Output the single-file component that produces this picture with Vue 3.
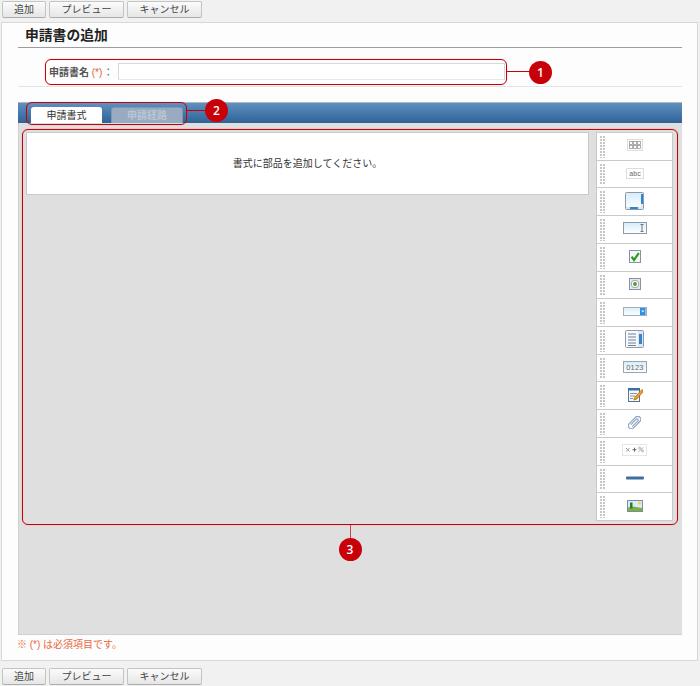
<script setup>
const buttons = [
  { label: '追加', cls: 'btn-add' },
  { label: 'プレビュー', cls: 'btn-preview' },
  { label: 'キャンセル', cls: 'btn-cancel' }
]
</script>

<template>
  <div class="page">
    <div class="toolbar">
      <button v-for="b in buttons" :key="b.label" class="btn" :class="b.cls">{{ b.label }}</button>
    </div>

    <main class="panel">
      <h1 class="title">申請書の追加</h1>

      <div class="form-row">
        <label class="field-label">申請書名 <span class="req">(*)</span><span class="colon">：</span></label>
        <input class="name-input" type="text" />
      </div>

      <section class="editor">
        <div class="tabbar">
          <div class="tab active">申請書式</div>
          <div class="tab">申請経路</div>
        </div>
        <div class="workspace">
          <div class="canvas">
            <div class="message">書式に部品を追加してください。</div>
          </div>
          <div class="palette">
            <div class="item">
              <svg width="16" height="12" viewBox="0 0 16 12"><rect x=".5" y=".5" width="15" height="11" fill="#fff" stroke="#bbb" stroke-dasharray="1 1"/><g fill="none" stroke="#999" stroke-width=".8"><rect x="2.5" y="2.5" width="3" height="3"/><rect x="6.5" y="2.5" width="3" height="3"/><rect x="10.5" y="2.5" width="3" height="3"/><rect x="2.5" y="6.5" width="3" height="3"/><rect x="6.5" y="6.5" width="3" height="3"/><rect x="10.5" y="6.5" width="3" height="3"/></g></svg>
            </div>
            <div class="item">
              <svg width="18" height="11" viewBox="0 0 18 11"><rect x=".5" y=".5" width="17" height="10" fill="#fff" stroke="#bbb" stroke-dasharray="1 1"/><text x="9" y="8" text-anchor="middle" class="svg-text" fill="#666">abc</text></svg>
            </div>
            <div class="item">
              <svg width="19" height="18" viewBox="0 0 19 18"><defs><linearGradient id="fieldFill" x1="0" y1="0" x2="0" y2="1"><stop offset="0" stop-color="#d6ecfb"/><stop offset="1" stop-color="#ffffff"/></linearGradient></defs><rect x=".5" y=".5" width="18" height="17" rx="1" fill="url(#fieldFill)" stroke="#8d99a8"/><rect x="16" y="1" width="2" height="16" fill="#e3e8ee"/><rect x="16" y="2" width="2" height="10" fill="#2f86d8"/><rect x="1" y="15" width="15" height="2" fill="#dde3ea"/><rect x="5" y="15" width="8" height="2" fill="#2f86d8"/></svg>
            </div>
            <div class="item">
              <svg width="24" height="12" viewBox="0 0 24 12"><rect x=".5" y=".5" width="23" height="11" fill="url(#fieldFill)" stroke="#8d99a8"/><path d="M17.5 2.5h3M19 2.5v7M17.5 9.5h3" fill="none" stroke="#777"/></svg>
            </div>
            <div class="item">
              <svg width="12" height="13" viewBox="0 0 12 13"><rect x=".5" y=".5" width="11" height="12" fill="#f4f6f8" stroke="#8793a2"/><path d="M2.6 6.6 5 10 9.8 3" fill="none" stroke="#2f9a1e" stroke-width="2.2"/></svg>
            </div>
            <div class="item">
              <svg width="12" height="12" viewBox="0 0 12 12"><rect x=".5" y=".5" width="11" height="11" fill="#e6eaee" stroke="#8793a2"/><circle cx="6" cy="6" r="3.8" fill="#fff" stroke="#9aa5b2"/><circle cx="6" cy="6" r="1.9" fill="#4f9a28"/></svg>
            </div>
            <div class="item">
              <svg width="24" height="9" viewBox="0 0 24 9"><rect x=".5" y=".5" width="23" height="8" fill="url(#fieldFill)" stroke="#a3aebb"/><rect x="17" y="1" width="5.5" height="7" fill="#2f8fe0"/><path d="M18.3 3.4h3L19.8 5.6z" fill="#fff"/></svg>
            </div>
            <div class="item">
              <svg width="19" height="18" viewBox="0 0 19 18"><rect x=".5" y=".5" width="18" height="17" rx="1" fill="#f7f9fc" stroke="#8d99a8"/><path d="M3 4h8M3 7h8M3 10h8M3 13h8M3 15.5h8" stroke="#6f7f92"/><rect x="13" y="1" width="5" height="16" fill="#dfe5eb"/><rect x="14" y="4" width="3" height="10" fill="#2f86d8"/></svg>
            </div>
            <div class="item">
              <svg width="24" height="12" viewBox="0 0 24 12"><rect x=".5" y=".5" width="23" height="11" fill="url(#fieldFill)" stroke="#9aa5b2"/><text x="12" y="9" text-anchor="middle" class="svg-text num" fill="#666">0123</text></svg>
            </div>
            <div class="item">
              <svg width="16" height="15" viewBox="0 0 16 15"><rect x="1.5" y="2.5" width="11" height="12" fill="#f5f8fc" stroke="#5a7390"/><rect x="1" y="1" width="12" height="2.5" fill="#3c6fa6"/><path d="M3 6.5h7M3 9h5M3 11.5h3" stroke="#7e93aa"/><path d="M15 2.5 8 10l-1.2 3 3-1 6.2-7z" fill="#f0a020" stroke="#a85e10" stroke-width=".7"/></svg>
            </div>
            <div class="item">
              <svg width="13" height="13" viewBox="0 0 13 13"><g transform="rotate(45 6.5 6.5)" fill="none" stroke="#8ea3c6" stroke-width="1.2"><rect x="3.6" y="-1" width="6" height="15" rx="3"/><path d="M5.4 10.5V2.8c0-1.3 2.4-1.3 2.4 0V11"/></g></svg>
            </div>
            <div class="item">
              <svg width="25" height="12" viewBox="0 0 25 12"><rect x=".5" y=".5" width="24" height="11" fill="#fff" stroke="#ccc" stroke-dasharray="1 1"/><path d="M4 4l3.5 3.5M7.5 4 4 7.5" stroke="#999"/><path d="M10.5 5.7h4M12.5 3.7v4" stroke="#666"/><path d="M17 7.5l4-4" stroke="#999"/><circle cx="17.5" cy="4" r="1" fill="none" stroke="#999" stroke-width=".7"/><circle cx="20.5" cy="7" r="1" fill="none" stroke="#999" stroke-width=".7"/></svg>
            </div>
            <div class="item">
              <svg width="18" height="4" viewBox="0 0 18 4"><rect x="0" y=".5" width="18" height="3" rx="1" fill="#3f6d9f"/></svg>
            </div>
            <div class="item">
              <svg width="16" height="12" viewBox="0 0 16 12"><rect x=".5" y=".5" width="15" height="11" fill="#d8ecfa" stroke="#7f8ca0"/><circle cx="12.5" cy="3" r="1.5" fill="#f3d34a"/><path d="M1 7.5 6 6.500l9 1.500v3H1z" fill="#7cb043"/><rect x="3" y="2.5" width="2.5" height="6" fill="#2f7a2a"/></svg>
            </div>
          </div>
        </div>
      </section>

      <p class="note">※ (*) は必須項目です。</p>
    </main>

    <div class="toolbar bottom">
      <button v-for="b in buttons" :key="b.label" class="btn" :class="b.cls">{{ b.label }}</button>
    </div>

    <div class="callout c1"></div>
    <div class="leader l1"></div>
    <div class="pin p1">1</div>
    <div class="callout c2"></div>
    <div class="leader l2"></div>
    <div class="pin p2">2</div>
    <div class="callout c3"></div>
    <div class="leader l3"></div>
    <div class="pin p3">3</div>
  </div>
</template>

<style>
html, body { margin: 0; background: #f1f1f1; }
</style>

<style scoped>
.page {
  position: relative;
  width: 700px;
  height: 686px;
  overflow: hidden;
  background: #f1f1f1;
  font-family: "Liberation Sans", "Noto Sans CJK JP", sans-serif;
  font-size: 10px;
  color: #333;
}
.toolbar {
  display: flex;
  gap: 3px;
  height: 17px;
  padding: 1px 0 0 2px;
}
.toolbar.bottom { padding-top: 7px; }
.btn {
  box-sizing: border-box;
  height: 17px;
  padding: 0;
  border: 1px solid #c4c4c4;
  border-bottom-color: #adadad;
  border-radius: 2px;
  background: linear-gradient(#fbfbfb, #e6e6e6);
  color: #444;
  font: inherit;
  font-size: 10px;
  line-height: 15px;
}
.btn-add { width: 44px; }
.btn-preview { width: 75px; }
.btn-cancel { width: 75px; }

.panel {
  box-sizing: border-box;
  height: 639px;
  margin: 4px 2px 0 1px;
  padding: 0 15px 0 16px;
  background: #fdfdfd;
  border: 1px solid #d8d8d8;
}
.title {
  margin: 0;
  height: 25px;
  padding: 3px 0 0 7px;
  box-sizing: border-box;
  border-bottom: 1px solid #9c9c9c;
  font-size: 13.8px;
  line-height: 19px;
  font-weight: 700;
  color: #222;
}
.form-row {
  box-sizing: border-box;
  display: flex;
  align-items: center;
  height: 39px;
  padding: 8px 0 0 31px;
  border-bottom: 1px solid #e4e4e4;
}
.field-label {
  width: 69px;
  flex: none;
  font-weight: 700;
  color: #555;
  font-size: 10px;
  white-space: nowrap;
}
.req { color: #e2622c; font-weight: 400; }
.colon { margin-left: 1px; font-weight: 400; }
.name-input {
  box-sizing: border-box;
  width: 387px;
  height: 17px;
  padding: 0;
  background: #fff;
  border: 1px solid #d8d8d8;
  border-bottom-color: #e8e8e8;
  outline: none;
}
.editor {
  margin-top: 15px;
  height: 533px;
  display: flex;
  flex-direction: column;
}
.tabbar {
  box-sizing: border-box;
  flex: none;
  height: 21px;
  display: flex;
  align-items: flex-end;
  gap: 9px;
  padding-left: 13px;
  background: linear-gradient(#5e90c1, #2f6395);
  border-top: 1px solid #b4b8be;
}
.tab {
  box-sizing: border-box;
  width: 72px;
  height: 16px;
  border-radius: 3px 3px 0 0;
  background: #99abc1;
  border: 1px solid #7f97b2;
  border-bottom: none;
  color: #b9c6d4;
  font-weight: 700;
  font-size: 10px;
  line-height: 15px;
  text-align: center;
}
.tab.active {
  width: 71px;
  background: #fff;
  border-color: #fff;
  color: #333;
  font-weight: 400;
}
.workspace {
  flex: 1;
  display: flex;
  gap: 7px;
  padding: 9px 9px 0 7px;
  background: #dfdfdf;
  border-left: 1px solid #cfcfcf;
  border-bottom: 1px solid #cfcfcf;
  min-height: 0;
}
.canvas { flex: 1; min-width: 0; }
.message {
  box-sizing: border-box;
  height: 63px;
  line-height: 61px;
  background: #fff;
  border: 1px solid #c9c9c9;
  text-align: center;
  font-size: 10px;
  color: #333;
}
.palette {
  flex: none;
  width: 77px;
  height: 389px;
  display: grid;
  grid-template-rows: repeat(14, 1fr);
  gap: 1px;
  background: #c9c9c9;
  border: 1px solid #c9c9c9;
  box-sizing: border-box;
}
.item {
  display: flex;
  align-items: center;
  justify-content: center;
  padding-bottom: 2px;
  background-color: #fff;
  position: relative;
  min-height: 0;
}
.item::before {
  content: "";
  position: absolute;
  top: 2px;
  bottom: 2px;
  left: 3px;
  width: 5px;
  background-image:
    linear-gradient(#fff 1px, transparent 1px),
    linear-gradient(90deg, #c6c6c6 2px, transparent 2px);
  background-size: 3px 3px;
}
.item svg { display: block; }
.svg-text { font-family: "Liberation Sans", sans-serif; font-size: 7px; }
.svg-text.num { font-size: 7.5px; letter-spacing: .2px; }
.note {
  margin: 3px 0 0 -1px;
  font-size: 10px;
  line-height: 14px;
  color: #e8683c;
}

.callout {
  position: absolute;
  box-sizing: border-box;
  border: 1.5px solid #c8000a;
  border-radius: 6px;
  box-shadow: 0 0 1px rgba(200, 0, 10, .5);
}
.c1 { left: 45px; top: 59px; width: 462px; height: 26px; }
.c2 { left: 26px; top: 102px; width: 161px; height: 23px; }
.c3 { left: 22px; top: 129px; width: 656px; height: 396px; }
.leader { position: absolute; background: #c8000a; }
.l1 { left: 507px; top: 71px; width: 25px; height: 1px; }
.l2 { left: 187px; top: 110px; width: 20px; height: 1px; }
.l3 { left: 349.5px; top: 525px; width: 1px; height: 15px; background: #c0484e; }
.pin {
  position: absolute;
  width: 23px;
  height: 23px;
  border-radius: 50%;
  background: #c8000a;
  color: #fff;
  font-size: 12px;
  font-weight: 600;
  font-family: "Open Sans", sans-serif;
  line-height: 23px;
  text-align: center;
}
.p1 { left: 529px; top: 61px; }
.p2 { left: 205px; top: 99px; }
.p3 { left: 338.5px; top: 538px; }
</style>
